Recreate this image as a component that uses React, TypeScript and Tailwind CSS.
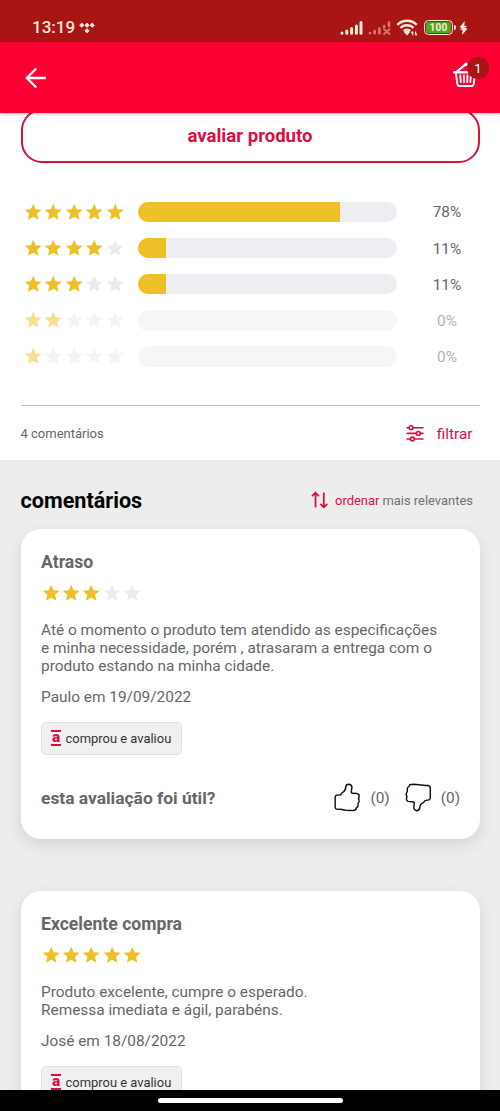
interface Review {
  title: string
  stars: number
  lines: string[]
  author: string
}

const ratings = [
  { stars: 5, percent: 78 },
  { stars: 4, percent: 11 },
  { stars: 3, percent: 11 },
  { stars: 2, percent: 0 },
  { stars: 1, percent: 0 },
]

const reviews: Review[] = [
  {
    title: 'Atraso',
    stars: 3,
    lines: [
      'Até o momento o produto tem atendido as especificações',
      'e minha necessidade, porém , atrasaram a entrega com o',
      'produto estando na minha cidade.',
    ],
    author: 'Paulo em 19/09/2022',
  },
  {
    title: 'Excelente compra',
    stars: 5,
    lines: ['Produto excelente, cumpre o esperado.', 'Remessa imediata e ágil, parabéns.'],
    author: 'José em 18/08/2022',
  },
]

function Stars({ count }: { count: number }) {
  return (
    <div className="flex shrink-0">
      {[1, 2, 3, 4, 5].map(n => (
        <svg
          key={n}
          viewBox="0 0 24 24"
          className={n <= count ? 'size-[20.4px] fill-[#eec028]' : 'size-[20.4px] fill-[#ebebed]'}
        >
          <path d="M12 17.27L18.18 21l-1.64-7.03L22 9.24l-7.19-.61L12 2 9.19 8.63 2 9.24l5.46 4.73L5.82 21z" />
        </svg>
      ))}
    </div>
  )
}

function StatusBar() {
  return (
    <div className="flex h-[42px] shrink-0 items-center bg-[#a91414] pl-8 pr-[32px] pt-[13px]">
      <span className="text-[17px] font-medium leading-none text-[#fbe9dc]">13:19</span>
      <svg
        className="ml-[4px] h-3 w-4 fill-[#fbe9dc]"
        viewBox="0 0 16 12"
        stroke="#fbe9dc"
        strokeWidth="0.8"
        strokeLinejoin="round"
      >
        <path d="M2.8 1l2.2 2.2-2.2 2.2L.6 3.200zM8 1l2.200 2.200L8 5.400 5.800 3.200zM13.200 1l2.200 2.200-2.200 2.200L11 3.200zM8 6.600l2.200 2.200L8 11 5.800 8.800z" />
      </svg>
      <div className="ml-auto flex items-center">
        {/* Mobile signal */}
        <svg className="h-4 w-[23px]" viewBox="0 0 23 16" stroke="#fbe9dc" strokeWidth="3" strokeLinecap="round">
          <path d="M2 13v.2M6.800 11v2.200M11.600 8.500v4.700M16.400 6v7.200M21 2.500v10.700" />
        </svg>
        {/* Second SIM, no service */}
        <svg className="ml-[5px] h-4 w-[23px]" viewBox="0 0 23 16" stroke="#d97673" strokeWidth="2.600" strokeLinecap="round">
          <path d="M2 13v.2M6.700 11v2.200M11.400 8.500v4.700M16.200 6v1M21 2.500v3.500" />
          <path d="M16 9.200l5.500 4.800M21.500 9.200L16 14" strokeWidth="1.900" />
        </svg>
        <svg className="ml-[5px] h-[17px] w-[22px]" viewBox="0 0 22 17" fill="none" stroke="#fbe9dc">
          <path d="M1.300 5.800a13.500 13.500 0 0 1 19.400 0M4.500 9a9 9 0 0 1 13 0M7.700 12a5 5 0 0 1 6.600 0" strokeWidth="2.400" />
          <path d="M11 16.500l-3-3.300a4 4 0 0 1 6 0z" fill="#fbe9dc" stroke="none" />
          <path d="M16.800 16.300v-3.600M15.500 14l1.300-1.500M19.600 12.500v3.700M21 14.800l-1.400 1.500" strokeWidth="1.200" />
        </svg>
        {/* Battery */}
        <div className="ml-[6px] flex h-[15px] w-[29px] items-center justify-center rounded-[4.500px] border-[1.500px] border-[#fbe9dc] p-px">
          <div className="flex h-full w-full items-center justify-center rounded-[2px] bg-[#55a51c] text-[10px] font-bold leading-none tracking-[0.300px] text-[#fbe9dc]">
            100
          </div>
        </div>
        <div className="ml-px h-[5px] w-[2px] rounded-r bg-[#fbe9dc]" />
        <svg className="ml-[3px] h-[14px] w-[9px] fill-[#fbe9dc]" viewBox="0 0 9 14">
          <path d="M5.800 0L.5 6.200l3 1-2.800.8L3.600 9.500 3 14l5.500-6.200-2.900-1.200L8.400 5.500 5.300 4.400z" />
        </svg>
      </div>
    </div>
  )
}

function Header() {
  return (
    <header className="z-10 flex h-[71px] shrink-0 items-center justify-between bg-[#fb0032] pl-[25px] pr-[22px] shadow-[0_1px_3px_rgba(0,0,0,0.250)]">
      <svg className="size-[22px]" viewBox="0 0 22 22" fill="none" stroke="#fff" strokeWidth="2.300">
        <path d="M20.800 11H2.500M11.300 1.500L1.800 11l9.500 9.500" />
      </svg>
      <div className="relative mt-[-7px]">
        <svg className="h-[28px] w-[25px]" viewBox="0 0 26 28" fill="none" stroke="#fff" strokeLinecap="round" strokeLinejoin="round">
          <path d="M1.500 12.200h23.500" strokeWidth="2.600" />
          <path d="M3 13l1.500 11.500a2.200 2.200 0 0 0 2 2h13a2.200 2.200 0 0 0 2-2l1.500-11.500" strokeWidth="2" />
          <path d="M4 11.500L12.500 4.500" strokeWidth="2.200" />
          <circle cx="13.500" cy="4" r="1.900" fill="#fff" stroke="none" />
          <path d="M7.500 15.500l.6 7M11.300 15.500l.2 7M15 15.500l-.2 7M18.600 15.500l-.6 7" strokeWidth="1.900" />
        </svg>
        <span className="absolute -right-[11px] -top-[3px] flex size-[22px] items-center justify-center rounded-full bg-[#a91414] text-[13px] leading-none text-white">
          1
        </span>
      </div>
    </header>
  )
}

function BuyerBadge() {
  return (
    <div className="flex h-[33px] w-[141px] items-center rounded-[5px] border border-[#e2e2e2] bg-[#f0f0f0] pl-[9px] text-[12.950px] text-[#333]">
      <span className="mr-[4.500px] flex h-[16px] w-[10px] items-center justify-center border-y-2 border-[#d8103f] pb-px text-[15.500px] font-black leading-none text-[#d8103f]">
        a
      </span>
      comprou e avaliou
    </div>
  )
}

function ReviewCard({ review }: { review: Review }) {
  return (
    <article className="mx-[20.500px] flex shrink-0 flex-col items-start whitespace-nowrap rounded-[20px] bg-white px-[20.500px] pb-[25.500px] text-[#666] shadow-[0_6px_16px_rgba(0,0,0,0.100)]">
      <h3 className="mt-[21px] text-[17.600px] font-bold leading-6">{review.title}</h3>
      <div className="-ml-[0.500px] mt-[9.500px]">
        <Stars count={review.stars} />
      </div>
      <div className="mt-[17.500px] text-[15.400px] leading-[18px]">
        {review.lines.map(line => (
          <p key={line}>{line}</p>
        ))}
      </div>
      <p className="mt-[13px] text-[15.400px] leading-[18px]">{review.author}</p>
      <div className="mt-[15.500px]">
        <BuyerBadge />
      </div>
      <div className="mt-[28.500px] flex h-[30px] w-full items-center">
        <span className="mr-auto text-[17.400px] font-bold">esta avaliação foi útil?</span>
        <svg className="-mt-[2px] h-[29px] w-[27px]" viewBox="0 0 28 30" fill="none" stroke="#111" strokeWidth="1.500" strokeLinejoin="round">
          <path d="M12.300 3.500Q12.500 1.500 15 1.300Q18 1.400 18.600 4L17.900 9.500Q18 10.700 19.200 10.600L23.500 10.800Q26.700 11.500 26 14L25.500 16L26 18Q26.500 20 25 20.800L24.900 23.500Q24.500 25 23.300 25.500Q23 28.400 20 28.400L12 28.300L6.500 27.200L3.300 27.300Q1.200 27 1.200 25V14.500Q1.500 12.500 4 12.500L7 12.200Q7.500 10.500 10 9Q12 7.700 12.300 3.500Z" />
        </svg>
        <span className="ml-[9px] text-[15.400px]">(0)</span>
        <svg className="-mt-[2px] ml-[15px] h-[29px] w-[27px]" viewBox="0 0 28 30" fill="none" stroke="#111" strokeWidth="1.500" strokeLinejoin="round">
          <path d="M5 1.800L9 1.200L21.500 2.500L24 2.500Q26.300 3 26.200 5.500V16Q25.500 18 23 17.700L20.500 18.500Q19.500 20.500 17.500 21.200Q15.500 22 15.500 25Q15.200 28.500 12 28.700Q9.500 28 9.100 26L9.700 20.500Q9 19.300 7 19.500L3 19Q1.200 18.300 1.500 16.500L2 14L1.200 12Q1.200 10 2.400 9V6Q2.500 4 4 3.700Z" />
        </svg>
        <span className="-mr-px ml-[9px] text-[15.400px]">(0)</span>
      </div>
    </article>
  )
}

export default function App() {
  return (
    <div className="flex h-[1111px] w-[500px] flex-col overflow-hidden bg-white font-[Roboto,sans-serif]">
      <StatusBar />
      <Header />

      <main className="flex min-h-0 flex-1 flex-col overflow-hidden">
        <button className="mx-[20.500px] -mt-1 h-[54px] shrink-0 rounded-[21px] border-2 border-[#d8103f] pt-[2px] text-[18.600px] font-bold text-[#d8103f]">
          avaliar produto
        </button>

        {/* Rating breakdown */}
        <section className="mt-[31px] shrink-0">
          {ratings.map(({ stars, percent }) => (
            <div
              key={stars}
              className={percent ? 'flex h-[36.100px] items-center pl-[23px]' : 'flex h-[36.100px] items-center pl-[23px] opacity-50'}
            >
              <Stars count={stars} />
              <div className="ml-[13px] h-[20.500px] w-[259px] overflow-hidden rounded-full bg-[#eceef2]">
                <div className="h-full bg-[#eec028]" style={{ width: `${percent}%` }} />
              </div>
              <span className="ml-[21px] w-[58px] pt-[2px] text-center text-[15.400px] text-[#666]">{percent}%</span>
            </div>
          ))}
        </section>

        <div className="mx-[20.500px] mt-[30.500px] flex h-[55px] shrink-0 items-center border-t border-[#bcbcbc] pr-[7px] pt-px">
          <span className="mr-auto pt-px text-[13px] text-[#666]">4 comentários</span>
          <svg className="h-[17px] w-[18px]" viewBox="0 0 18 17" fill="none" stroke="#d8103f" strokeWidth="1.600">
            <path d="M.5 2.700H3M7.200 2.700H17.500M.5 8.400H10M14.500 8.400H17.500M.5 14H4.200M8.700 14H17.500" />
            <circle cx="5.100" cy="2.700" r="1.900" />
            <circle cx="12.300" cy="8.400" r="1.900" />
            <circle cx="6.400" cy="14" r="1.900" />
          </svg>
          <span className="ml-[13px] pt-[2px] text-[15.400px] text-[#d8103f]">filtrar</span>
        </div>

        {/* Comments */}
        <section className="flex min-h-0 flex-1 flex-col overflow-hidden bg-[#ededed]">
          <div className="flex h-[69px] shrink-0 items-center pl-[20.500px] pr-[27px] pt-[12.500px]">
            <h2 className="mr-auto text-[21.600px] font-bold text-black">comentários</h2>
            <svg className="-mt-px h-[18px] w-[18px]" viewBox="0 0 18 18" fill="none" stroke="#d8103f" strokeWidth="1.800">
              <path d="M4.500 16.500V2M1 5.200L4.500 1.700L8 5.200M12.800 1.500V16M9.300 12.800l3.500 3.500 3.500-3.500" />
            </svg>
            <span className="ml-[6px] text-[12.950px] text-[#d8103f]">ordenar</span>
            <span className="ml-[3px] text-[12.950px] text-[#707070]">mais relevantes</span>
          </div>
          <div className="flex flex-col gap-[52px]">
            {reviews.map(review => (
              <ReviewCard key={review.title} review={review} />
            ))}
          </div>
        </section>
      </main>

      <div className="flex h-[21px] shrink-0 justify-center bg-black pt-[8px]">
        <div className="h-[5px] w-[185px] rounded-full bg-white" />
      </div>
    </div>
  )
}
